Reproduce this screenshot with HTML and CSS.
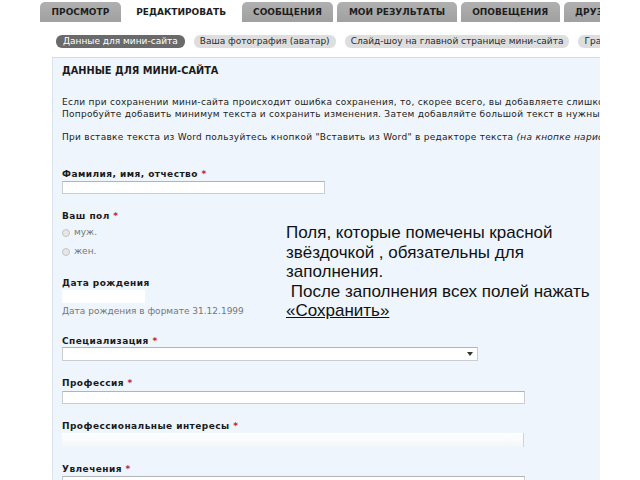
FILE: index.html
```html
<!DOCTYPE html>
<html lang="ru">
<head>
<meta charset="utf-8">
<title>Данные для мини-сайта</title>
<link rel="stylesheet" href="styles.css">
</head>
<body>
<div class="page">
  <nav class="tabs">
    <span class="tab">ПРОСМОТР</span>
    <span class="tab active">РЕДАКТИРОВАТЬ</span>
    <span class="tab">СООБЩЕНИЯ</span>
    <span class="tab">МОИ РЕЗУЛЬТАТЫ</span>
    <span class="tab">ОПОВЕЩЕНИЯ</span>
    <span class="tab">ДРУЗЬЯ</span>
  </nav>
  <div class="subtabs">
    <span class="pill active">Данные для мини-сайта</span>
    <span class="pill">Ваша фотография (аватар)</span>
    <span class="pill">Слайд-шоу на главной странице мини-сайта</span>
    <span class="pill">Графика</span>
  </div>
  <div class="panel">
    <h2 class="title">ДАННЫЕ ДЛЯ МИНИ-САЙТА</h2>
    <p class="info">Если при сохранении мини-сайта происходит ошибка сохранения, то, скорее всего, вы добавляете слишком много текста.<br>Попробуйте добавить минимум текста и сохранить изменения. Затем добавляйте большой текст в нужные поля.</p>
    <p class="info info2">При вставке текста из Word пользуйтесь кнопкой "Вставить из Word" в редакторе текста <em>(на кнопке нарисована буква W)</em></p>

    <div class="field first">
      <div class="label">Фамилия, имя, отчество <span class="req">*</span></div>
      <div class="input w-name"></div>
    </div>

    <div class="field">
      <div class="label">Ваш пол <span class="req">*</span></div>
      <div class="radios">
        <div class="radio"><span class="dot"></span>муж.</div>
        <div class="radio"><span class="dot"></span>жен.</div>
      </div>
    </div>

    <div class="field">
      <div class="label">Дата рождения</div>
      <div class="input w-date"></div>
      <div class="hint">Дата рождения в формате 31.12.1999</div>
    </div>

    <div class="field spec">
      <div class="label">Специализация <span class="req">*</span></div>
      <div class="select"><span class="arrow"></span></div>
    </div>

    <div class="field">
      <div class="label">Профессия <span class="req">*</span></div>
      <div class="input w-wide gap2"></div>
    </div>

    <div class="field">
      <div class="label">Профессиональные интересы <span class="req">*</span></div>
      <div class="input w-wide area"></div>
    </div>

    <div class="field">
      <div class="label">Увлечения <span class="req">*</span></div>
      <div class="input w-wide"></div>
    </div>
  </div>
  <div class="note">Поля, которые помечены красной<br>звёздочкой , обязательны для<br>заполнения.<br>&nbsp;После заполнения всех полей нажать<br><u>«Сохранить»</u></div>
</div>
</body>
</html>
```
FILE: styles.css
```css
html, body {
  margin: 0;
  padding: 0;
  background: #ffffff;
}
.page {
  position: relative;
  width: 600px;
  height: 480px;
  overflow: hidden;
  font-family: "DejaVu Sans", Verdana, sans-serif;
  font-size: 9px;
  color: #222;
}
.tabs {
  display: flex;
  gap: 4px;
  padding: 2px 0 0 40px;
  white-space: nowrap;
}
.tab {
  height: 20px;
  line-height: 21px;
  padding: 0 11.5px;
  background: linear-gradient(#b0b0b0, #a0a0a0);
  border-radius: 5px 5px 0 0;
  font-weight: bold;
  color: #1e1e1e;
  flex: none;
}
.tab.active {
  background: #ffffff;
}
.subtabs {
  display: flex;
  gap: 9px;
  padding: 13px 0 0 56px;
  white-space: nowrap;
}
.pill {
  height: 13px;
  line-height: 13px;
  padding: 0 6px;
  border-radius: 6px;
  background: #dedede;
  color: #2a2a2a;
  flex: none;
}
.pill.active {
  padding: 0 7px;
  background: #6a6a6a;
  color: #ffffff;
}
.panel {
  margin: 9px 0 0 52px;
  border-top: 1px solid #d4dde6;
  border-left: 1px solid #d8e3ee;
  background: #eef5fd;
  padding: 7px 0 0 9px;
  height: 430px;
  white-space: nowrap;
  overflow: hidden;
}
.title {
  margin: 0;
  font-size: 9.8px;
  line-height: 12px;
  font-weight: bold;
  color: #1a1a1a;
}
.info {
  margin: 19px 0 0;
  line-height: 12px;
  letter-spacing: 0.28px;
  color: #222;
}
.info.info2 {
  margin-top: 11px;
}
.info em {
  font-style: italic;
}
.field {
  margin-top: 16px;
}
.field.first {
  margin-top: 25px;
}
.field.spec {
  margin-top: 18px;
}
.label {
  font-weight: bold;
  line-height: 12px;
  letter-spacing: 0.45px;
  color: #1a1a1a;
}
.req {
  color: #c4222a;
}
.input {
  margin-top: 1px;
  height: 11px;
  background: #ffffff;
  border: 1px solid #c9cdd1;
  border-top-color: #b0b4b8;
}
.input.gap2 {
  margin-top: 2px;
}
.w-name { width: 261px; }
.w-date { width: 83px; height: 13px; border: none; }
.w-wide { width: 461px; }
.input.area {
  height: 14px;
  border: none;
  border-right: 1px solid #d0d4d8;
  background: linear-gradient(#ffffff, #f2f6fa);
}
.radios {
  margin-top: 1px;
}
.radio {
  height: 19px;
  line-height: 19px;
  color: #777;
  display: flex;
  align-items: center;
  gap: 4px;
}
.dot {
  width: 6px;
  height: 6px;
  border-radius: 50%;
  border: 1px solid #c4c4c4;
  background: #e6e6e6;
}
.hint {
  margin-top: 2px;
  line-height: 12px;
  color: #777;
}
.select {
  position: relative;
  width: 414px;
  height: 12px;
  background: #ffffff;
  border: 1px solid #c9cdd1;
  border-top-color: #b0b4b8;
}
.arrow {
  position: absolute;
  right: 4px;
  top: 4px;
  border-left: 3px solid transparent;
  border-right: 3px solid transparent;
  border-top: 4px solid #333;
}
.note {
  position: absolute;
  left: 286px;
  top: 223px;
  font-family: "Liberation Sans", Arial, sans-serif;
  font-size: 17px;
  line-height: 19.5px;
  color: #111;
  white-space: nowrap;
}
.note u {
  text-decoration: underline;
}
```
